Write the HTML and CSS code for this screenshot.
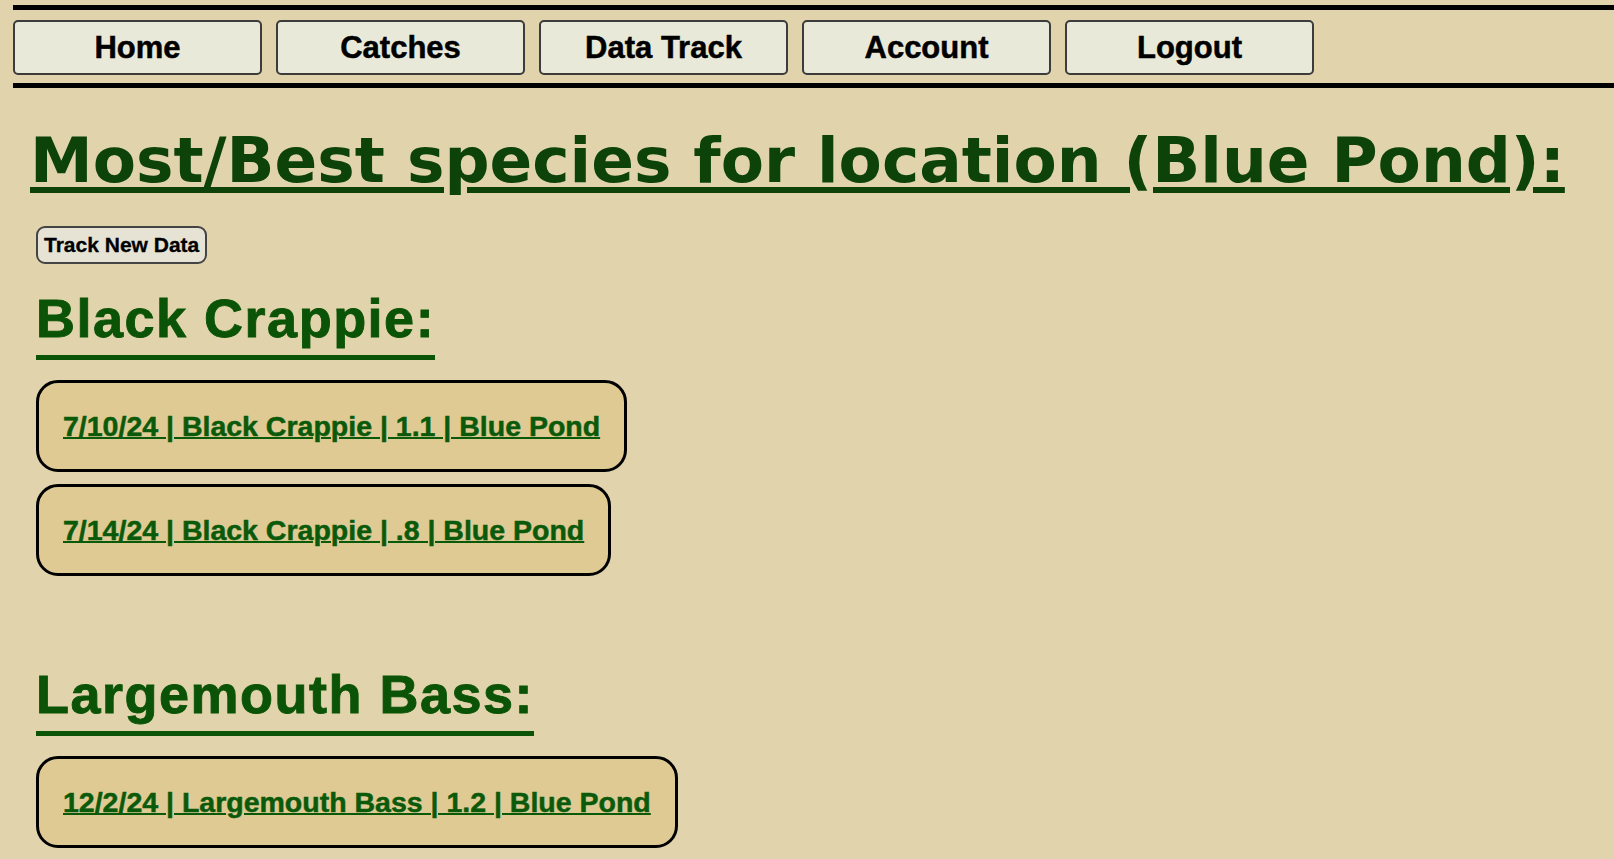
FILE: index.html
```html
<!DOCTYPE html>
<html lang="en">
<head>
<meta charset="utf-8">
<title>Data Track</title>
<link rel="stylesheet" href="styles.css">
</head>
<body>
<nav class="topnav">
  <a class="navbtn" href="#">Home</a>
  <a class="navbtn" href="#">Catches</a>
  <a class="navbtn" href="#">Data Track</a>
  <a class="navbtn" href="#">Account</a>
  <a class="navbtn" href="#">Logout</a>
</nav>
<main class="content">
  <h1 class="page-title"><a href="#">Most/Best species for location (Blue Pond):</a></h1>
  <button class="track-btn" type="button">Track New Data</button>

  <section class="species">
    <h2 class="species-title">Black Crappie:</h2>
    <div class="catch-card"><a href="#">7/10/24 | Black Crappie | 1.1 | Blue Pond</a></div>
    <div class="catch-card"><a href="#">7/14/24 | Black Crappie | .8 | Blue Pond</a></div>
  </section>

  <section class="species">
    <h2 class="species-title">Largemouth Bass:</h2>
    <div class="catch-card"><a href="#">12/2/24 | Largemouth Bass | 1.2 | Blue Pond</a></div>
  </section>
</main>
</body>
</html>
```

FILE: styles.css
```css
html, body {
  margin: 0;
  padding: 0;
  background: #e1d4ad;
}

body {
  font-family: "Liberation Sans", Arial, sans-serif;
  overflow: hidden;
}

.topnav {
  margin: 5px 0 0 13px;
  padding: 10px 0 8px;
  border-top: 5px solid #000;
  border-bottom: 5px solid #000;
  display: flex;
  gap: 14px;
}

.navbtn {
  box-sizing: border-box;
  width: 249px;
  height: 55px;
  display: flex;
  align-items: center;
  justify-content: center;
  background: #e9e9da;
  border: 2px solid #3c3c3c;
  border-radius: 5px;
  color: #000;
  text-decoration: none;
  font-weight: bold;
  font-size: 31px;
  -webkit-text-stroke: 0.5px #000;
}

.content {
  padding: 0 0 0 36px;
}

.page-title {
  margin: 36px 0 0 -6px;
  font-family: "DejaVu Sans", Verdana, sans-serif;
  font-weight: bold;
  font-size: 63px;
  line-height: 73px;
}

.page-title a {
  color: #0d4209;
  text-decoration: underline;
  text-decoration-thickness: 6px;
  text-underline-offset: 5px;
}

.track-btn {
  margin-top: 29px;
  box-sizing: border-box;
  height: 38px;
  padding: 0 6px;
  font-family: "Liberation Sans", Arial, sans-serif;
  font-weight: bold;
  font-size: 21px;
  color: #000;
  background: #e6e3d5;
  border: 2px solid #444;
  border-radius: 9px;
  -webkit-text-stroke: 0.3px #000;
}

.species {
  margin-top: 23px;
}

.species + .species {
  margin-top: 87px;
}

.species-title {
  display: inline-block;
  margin: 0 0 20px;
  padding-bottom: 5px;
  border-bottom: 5px solid #0b5306;
  color: #0b5306;
  font-size: 54px;
  line-height: 63px;
  font-weight: bold;
  letter-spacing: 1.5px;
  -webkit-text-stroke: 0.9px #0b5306;
}

.catch-card {
  width: fit-content;
  box-sizing: border-box;
  padding: 27.5px 24px 23.5px;
  margin-bottom: 12px;
  background: #dfca93;
  border: 3px solid #000;
  border-radius: 22px;
  line-height: 30px;
}

.catch-card a {
  color: #0b5a0b;
  font-weight: bold;
  font-size: 28.5px;
  text-decoration: underline;
  text-decoration-thickness: 2px;
  -webkit-text-stroke: 0.5px #0b5a0b;
}
```
